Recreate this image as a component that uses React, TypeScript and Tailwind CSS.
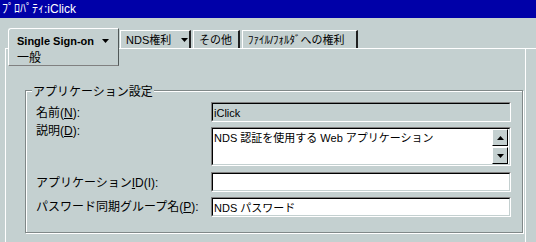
import React from "react";

const Caret = () => (
  <svg width="7" height="4" viewBox="0 0 7 4" className="shrink-0">
    <polygon points="0,0 7,0 3.5,4" fill="#000" />
  </svg>
);

interface SunkenProps {
  readonly className?: string;
  readonly innerClassName?: string;
  readonly children?: React.ReactNode;
}

const Sunken = ({ className = "", innerClassName = "", children }: SunkenProps) => (
  <div
    className={`border border-t-[#808080] border-l-[#808080] border-b-white border-r-white ${className}`}
  >
    <div
      className={`h-full border border-t-black border-l-black border-b-[#c4d0d0] border-r-[#c4d0d0] ${innerClassName}`}
    >
      {children}
    </div>
  </div>
);

const ScrollButton = ({ up }: { readonly up?: boolean }) => (
  <div className="w-[16px] h-[17px] flex items-center justify-center bg-[#c4d0d0] border border-t-white border-l-white border-b-black border-r-black">
    <svg width="7" height="4" viewBox="0 0 7 4">
      <polygon points={up ? "0,4 7,4 3.5,0" : "0,0 7,0 3.5,4"} fill="#000" />
    </svg>
  </div>
);

const App = () => {
  return (
    <div className="w-[536px] h-[242px] overflow-hidden bg-[#c4d0d0] flex flex-col text-black text-[12px] leading-[14px] font-['Liberation_Sans','Noto_Sans_CJK_JP',sans-serif]">
      {/* title bar */}
      <div className="h-[18px] shrink-0 bg-[#0000a8] text-white pl-[2px] flex items-center">
        ﾌﾟﾛﾊﾟﾃｨ:iClick
      </div>

      {/* tabs */}
      <div className="h-[30px] shrink-0 flex items-start pl-[8px] pt-[10px]">
        <div className="relative z-10 w-[111px] h-[38px] bg-[#c4d0d0] border border-t-white border-l-white border-r-[#505858] border-b-[#808080] rounded-tl-[3px] pl-[8px] pt-[5px]">
          <div className="flex items-center gap-[8px] text-[11px] font-bold">
            <span>Single Sign-on</span>
            <Caret />
          </div>
          <div className="mt-[3px] text-[12px]">一般</div>
        </div>
        <div className="ml-[1px] mt-[2px] w-[71px] h-[18px] border-l border-t border-white border-r-2 border-r-[#202020] flex items-center pl-[5px] gap-[10px] text-[11px]">
          <span>NDS権利</span>
          <Caret />
        </div>
        <div className="ml-[2px] mt-[2px] w-[47px] h-[18px] border-l border-t border-white border-r-2 border-r-[#202020] flex items-center pl-[5px] text-[11px]">
          その他
        </div>
        <div className="ml-[2px] mt-[2px] w-[116px] h-[18px] border-l border-t border-white border-r-2 border-r-[#202020] flex items-center pl-[5px] text-[11px]">
          ﾌｧｲﾙ/ﾌｫﾙﾀﾞへの権利
        </div>
      </div>

      {/* page */}
      <div className="flex-1 ml-[5px] border-l border-t border-white">
        <div className="w-[520px] h-full border-r border-white pt-[41px]">
          <div className="relative ml-[19px] w-[498px] h-[143px] border border-[#808888] shadow-[1px_1px_0_#fff,inset_1px_1px_0_#fff]">
            <span className="absolute left-[6px] top-[-6px] px-[1px] bg-[#c4d0d0]">
              アプリケーション設定
            </span>

            <div className="flex flex-col pl-[10px] pt-[11px]">
              <div className="flex items-start">
                <div className="w-[175px] pt-[4px]">
                  名前(<span className="underline">N</span>):
                </div>
                <Sunken className="w-[300px] h-[20px]" innerClassName="pl-[1px] pt-[2px] text-[11px]">
                  iClick
                </Sunken>
              </div>

              <div className="flex items-start mt-[5px]">
                <div className="w-[175px] mt-[-3px]">
                  説明(<span className="underline">D</span>):
                </div>
                <Sunken className="w-[300px] h-[39px]" innerClassName="bg-white flex">
                  <div className="flex-1 pl-[1px] pt-[2px] text-[11px]">
                    NDS 認証を使用する Web アプリケーション
                  </div>
                  <div className="flex flex-col justify-between pr-[1px]">
                    <ScrollButton up />
                    <ScrollButton />
                  </div>
                </Sunken>
              </div>

              <div className="flex items-start mt-[6px]">
                <div className="w-[175px] pt-[4px]">
                  アプリケーション<span className="underline">I</span>D(I):
                </div>
                <Sunken className="w-[300px] h-[20px]" innerClassName="bg-white" />
              </div>

              <div className="flex items-start mt-[5px]">
                <div className="w-[175px] pt-[3px]">
                  パスワード同期グループ名(<span className="underline">P</span>):
                </div>
                <Sunken className="w-[300px] h-[20px]" innerClassName="bg-white pl-[1px] pt-[2px] text-[11px]">
                  NDS パスワード
                </Sunken>
              </div>
            </div>
          </div>
        </div>
      </div>
    </div>
  );
};

export default App;
